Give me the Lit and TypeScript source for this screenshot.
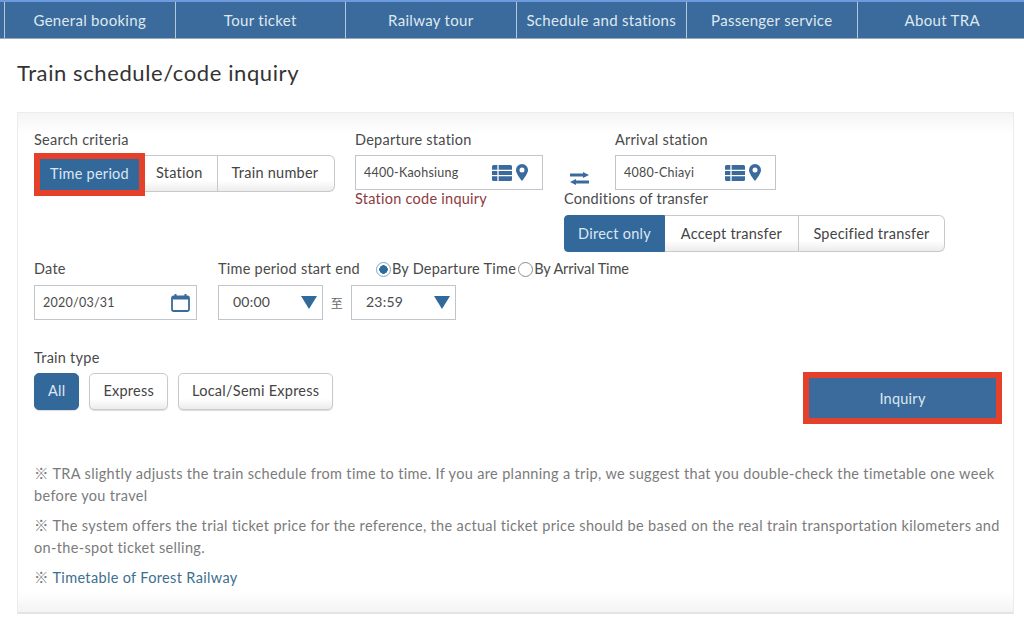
import { LitElement, html, css, svg } from "lit";
import { customElement } from "lit/decorators.js";

const navItems = ["General booking", "Tour ticket", "Railway tour", "Schedule and stations", "Passenger service", "About TRA"];

const listIcon = svg`<svg class="ic" width="20" height="16" viewBox="0 0 20 16"><path fill="#3a6b9c" d="M0 1.5A1.5 1.5 0 0 1 1.500 0H18.500A1.500 1.500 0 0 1 20 1.500V14.500A1.500 1.500 0 0 1 18.500 16H1.500A1.500 1.500 0 0 1 0 14.500Z"/><path stroke="#fff" stroke-width="1.300" d="M0 5.300H20M0 10.600H20M6 0V16"/></svg>`;
const pinIcon = svg`<svg class="pin" width="12" height="17" viewBox="0 0 12 17"><path fill="#3a6b9c" fill-rule="evenodd" d="M6 0a6 6 0 0 1 6 6c0 3.500-4 8.500-6 11C4 14.500 0 9.500 0 6a6 6 0 0 1 6-6Zm0 3.500a2.500 2.500 0 1 0 0 5 2.500 2.500 0 0 0 0-5Z"/></svg>`;
const swapIcon = svg`<svg width="19" height="13" viewBox="0 0 19 13"><path fill="#3a6b9c" d="M0 1.500h13V0l6 3-6 3V4.500H0ZM19 8.500H6V7L0 10l6 3v-1.500h13Z"/></svg>`;
const calIcon = svg`<svg width="19" height="19" viewBox="0 0 19 19"><rect x="1" y="3.500" width="17" height="14.500" rx="1.500" fill="none" stroke="#3a6b9c" stroke-width="1.800"/><path fill="#3a6b9c" d="M1 3h17v3.500H1ZM3.500 1h2v3h-2ZM13.500 1h2v3h-2Z"/></svg>`;
const caret = svg`<svg width="16" height="13" viewBox="0 0 16 13"><path fill="#32699b" d="M0 0h16L8 13Z"/></svg>`;

@customElement("app-root")
export class AppRoot extends LitElement {
  static styles = css`
    :host {
      display: block;
      height: 625px;
      overflow: hidden;
      background: #fff;
      font-family: "Lato", "Noto Sans CJK TC", sans-serif;
      font-size: 14.500px;
      color: #4a4a4a;
      letter-spacing: 0.250px;
    }
    .nav {
      display: grid;
      grid-template-columns: repeat(6, 170.500px);
      height: 36px;
      padding-left: 4px;
      background: #3a6b9c;
      border-top: 2px solid #6c9be0;
      border-bottom: 1px solid #9aa8b6;
    }
    .nav div {
      display: flex;
      align-items: center;
      justify-content: center;
      padding-bottom: 1px;
      color: #dfe8f0;
      border-left: 1px solid #b5c9dc;
      font-size: 15px;
      letter-spacing: 0.300px;
      white-space: nowrap;
    }
    h1 {
      margin: 0;
      padding: 19px 0 0 17px;
      height: 54px;
      font-size: 22px;
      font-weight: 400;
      line-height: 30px;
      color: #333;
      letter-spacing: 0.600px;
    }
    .panel {
      box-sizing: border-box;
      margin-left: 17px;
      width: 997px;
      height: 502px;
      padding: 18px 11px 0 16px;
      border: 1px solid #ececec;
      border-bottom: 2px solid #e4e4e4;
      background: linear-gradient(#f5f5f5, #fff 20px, #fff 478px, #f4f4f4);
    }
    .row1 { display: grid; grid-template-columns: 321px 209px 1fr; height: 129px; }
    .lbl { display: block; height: 18px; line-height: 18px; white-space: nowrap; }
    .group { display: inline-flex; height: 37px; margin-top: 6px; }
    .group button, .pill {
      font: inherit;
      letter-spacing: inherit;
      color: #444;
      padding: 0 14px 2px;
      border: 1px solid #c9c9c9;
      border-left-width: 0;
      background: linear-gradient(#fff, #fff 70%, #ececec);
      white-space: nowrap;
    }
    .group button:first-child { border-left-width: 1px; border-radius: 4px 0 0 4px; }
    .group button:last-child { border-radius: 0 6px 6px 0; }
    .group button.on, .pill.on {
      background: #33689b;
      color: #dce7f1;
      border-color: #33689b;
    }
    /* red annotation box from the screenshot */
    .group button.marked {
      position: relative;
      align-self: flex-start;
      box-sizing: border-box;
      width: 111px;
      height: 43px;
      margin-top: -2px;
      padding: 0 0 2px;
      border: 6px solid #e4402a;
      border-radius: 0;
    }
    .marked + button { padding-left: 11px; }
    .marked + button + button { padding-right: 16px; }
    .field {
      box-sizing: border-box;
      display: flex;
      align-items: center;
      height: 35px;
      margin-top: 6px;
      padding: 0 14px 0 8px;
      background: #fff;
      border: 1px solid #bfc5ca;
      font-size: 12.500px;
      white-space: nowrap;
    }
    .field .grow { flex: 1; }
    .pin { margin-left: 4px; }
    .dep { width: 188px; }
    .code { color: #8e3a3f; line-height: 18px; }
    .arr-row { display: flex; }
    .swap { width: 51px; padding: 40px 0 0 6px; box-sizing: border-box; }
    .arr { width: 161px; }
    .transfer .group { margin-top: 7px; }
    .transfer button { box-sizing: border-box; padding: 0; }
    .transfer button:nth-child(1) { width: 101px; }
    .transfer button:nth-child(2) { width: 134px; }
    .transfer button:nth-child(3) { width: 146px; }
    .row2 { display: flex; height: 89px; }
    .date { width: 184px; }
    .date .field { width: 163px; margin-top: 7px; padding-right: 6px; }
    .period-head { display: flex; white-space: nowrap; height: 18px; line-height: 18px; }
    .radio {
      box-sizing: border-box;
      width: 15px;
      height: 15px;
      margin: 2px 1px 0 2px;
      border-radius: 50%;
      border: 1px solid #8d8d8d;
      background: #fff;
    }
    .radio.on {
      border: 1.500px solid #7fa6cc;
      background: radial-gradient(#33689b 0 4px, #fff 4.500px);
      margin-left: 16px;
    }
    .by-arrival { letter-spacing: -0.100px; }
    .times { display: flex; align-items: center; }
    .sel {
      box-sizing: border-box;
      display: flex;
      align-items: center;
      justify-content: space-between;
      width: 105px;
      height: 35px;
      margin-top: 7px;
      padding: 0 5px 0 14px;
      background: #fff;
      border: 1px solid #bfc5ca;
      font-size: 14px;
    }
    .sel span { padding-bottom: 2px; }
    .to { width: 28px; text-align: center; font-size: 12px; padding-top: 7px; color: #666; }
    .row3 { display: flex; justify-content: space-between; height: 114px; }
    .pills { display: flex; gap: 10px; margin-top: 6px; }
    .pill { height: 37px; border: 1px solid #c9c9c9; border-radius: 5px; padding: 0 13px 2px; box-shadow: 0 1px 1px #ddd; }
    .inquiry {
      box-sizing: border-box;
      width: 199px;
      height: 52px;
      margin-top: 23px;
      font: inherit;
      letter-spacing: inherit;
      color: #dce7f1;
      background: #3a6b9c;
      border: 6px solid #e4402a;
    }
    .notes { color: #7b7b7b; line-height: 22px; letter-spacing: 0.340px; }
    .notes p { margin: 0 0 8px; }
    .notes a { color: #3d6f8f; }
  `;

  render() {
    return html`
      <div class="nav">${navItems.map((n) => html`<div>${n}</div>`)}</div>
      <h1>Train schedule/code inquiry</h1>
      <div class="panel">
        <div class="row1">
          <div>
            <span class="lbl">Search criteria</span>
            <div class="group">
              <button class="on marked">Time period</button>
              <button>Station</button>
              <button>Train number</button>
            </div>
          </div>
          <div>
            <span class="lbl">Departure station</span>
            <div class="field dep"><span class="grow">4400-Kaohsiung</span>${listIcon}${pinIcon}</div>
            <div class="code">Station code inquiry</div>
          </div>
          <div>
            <div class="arr-row">
              <div class="swap">${swapIcon}</div>
              <div>
                <span class="lbl">Arrival station</span>
                <div class="field arr"><span class="grow">4080-Chiayi</span>${listIcon}${pinIcon}</div>
              </div>
            </div>
            <div class="transfer">
              <span class="lbl">Conditions of transfer</span>
              <div class="group">
                <button class="on">Direct only</button>
                <button>Accept transfer</button>
                <button>Specified transfer</button>
              </div>
            </div>
          </div>
        </div>
        <div class="row2">
          <div class="date">
            <span class="lbl">Date</span>
            <div class="field"><span class="grow">2020/03/31</span>${calIcon}</div>
          </div>
          <div>
            <div class="period-head">
              <span>Time period start end</span>
              <span class="radio on"></span><span>By Departure Time</span>
              <span class="radio"></span><span class="by-arrival">By Arrival Time</span>
            </div>
            <div class="times">
              <div class="sel"><span>00:00</span>${caret}</div>
              <span class="to">至</span>
              <div class="sel"><span>23:59</span>${caret}</div>
            </div>
          </div>
        </div>
        <div class="row3">
          <div>
            <span class="lbl">Train type</span>
            <div class="pills">
              <button class="pill on">All</button>
              <button class="pill">Express</button>
              <button class="pill">Local/Semi Express</button>
            </div>
          </div>
          <button class="inquiry">Inquiry</button>
        </div>
        <div class="notes">
          <p>※ TRA slightly adjusts the train schedule from time to time. If you are planning a trip, we suggest that you double-check the timetable one week before you travel</p>
          <p>※ The system offers the trial ticket price for the reference, the actual ticket price should be based on the real train transportation kilometers and on-the-spot ticket selling.</p>
          <p>※ <a>Timetable of Forest Railway</a></p>
        </div>
      </div>
    `;
  }
}
